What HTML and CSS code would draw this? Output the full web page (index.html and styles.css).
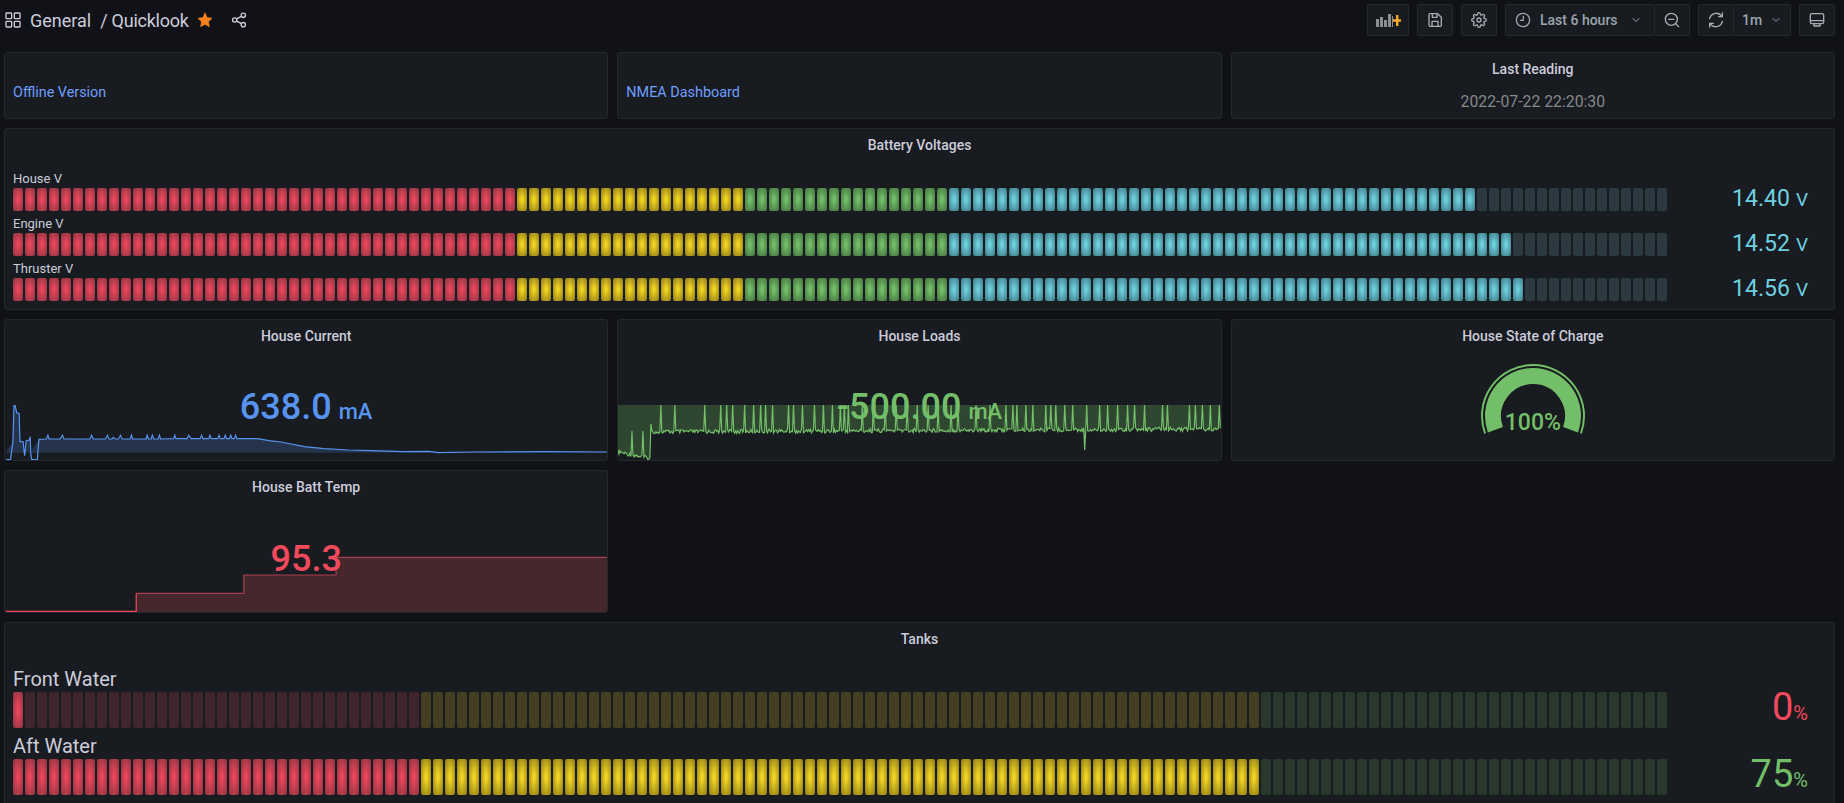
FILE: index.html
```html
<!DOCTYPE html>
<html lang="en">
<head>
    <meta charset="UTF-8">
    <meta name="viewport" content="width=device-width, initial-scale=1.0">
    <title>Quicklook</title>
    <link rel="stylesheet" href="styles.css">
</head>
<body>
    <header class="topbar">
        <div class="crumbs">
            <svg class="icon" viewBox="0 0 24 24"><rect x="1.500" y="1.500" width="8.500" height="8.500" rx="1"/><rect x="14" y="1.500" width="8.500" height="8.500" rx="1"/><rect x="1.500" y="14" width="8.500" height="8.500" rx="1"/><rect x="14" y="14" width="8.500" height="8.500" rx="1"/></svg>
            <span class="crumb-folder">General</span>
            <span class="crumb-name">/ Quicklook</span>
            <svg class="icon star" viewBox="0 0 24 24"><path d="M12 1.500l3.200 6.900 7.300 1-5.300 5.200 1.300 7.400L12 18.400 5.500 22l1.300-7.400L1.500 9.400l7.300-1z"/></svg>
            <svg class="icon share" viewBox="0 0 24 24"><circle cx="18.500" cy="5" r="3.200"/><circle cx="5.500" cy="12" r="3.200"/><circle cx="18.500" cy="19" r="3.200"/><path d="M8.400 10.400l7.200-3.800M8.400 13.600l7.200 3.800"/></svg>
        </div>
        <div class="toolbar">
            <button class="tool tool-add">
                <svg class="add-icon" viewBox="0 0 25 13"><path class="add-bars" d="M0 5h3v8H0zM4 3h3v10H4zM8 6h3v7H8zM12 0h3v13h-3z"/><path class="add-bar-thin" d="M16 2h1v11h-1z"/><path class="add-plus" d="M20 1h2.400v4.300H25v2.400h-2.600V12H20V7.700H17V5.300h3z"/></svg>
            </button>
            <button class="tool">
                <svg class="icon" viewBox="0 0 24 24"><path d="M5 2.500h11l5.500 5.500v11.500a2 2 0 0 1-2 2H5a2 2 0 0 1-2-2v-15a2 2 0 0 1 2-2z"/><path d="M7.500 21.500V14h9v7.500M8 2.500V8h7V2.500"/></svg>
            </button>
            <button class="tool">
                <svg class="icon" viewBox="0 0 24 24"><circle cx="12" cy="12" r="3"/><path d="M19.400 15a1.650 1.650 0 0 0 .33 1.820l.06.06a2 2 0 0 1 0 2.830 2 2 0 0 1-2.830 0l-.06-.06a1.650 1.650 0 0 0-1.820-.33 1.650 1.650 0 0 0-1 1.510V21a2 2 0 0 1-2 2 2 2 0 0 1-2-2v-.09A1.650 1.650 0 0 0 9 19.400a1.650 1.650 0 0 0-1.820.33l-.06.06a2 2 0 0 1-2.830 0 2 2 0 0 1 0-2.830l.06-.06a1.650 1.650 0 0 0 .33-1.820 1.650 1.650 0 0 0-1.510-1H3a2 2 0 0 1-2-2 2 2 0 0 1 2-2h.09A1.650 1.650 0 0 0 4.600 9a1.650 1.650 0 0 0-.33-1.820l-.06-.06a2 2 0 0 1 0-2.830 2 2 0 0 1 2.830 0l.06.06a1.650 1.650 0 0 0 1.820.33H9a1.650 1.650 0 0 0 1-1.510V3a2 2 0 0 1 2-2 2 2 0 0 1 2 2v.09a1.650 1.650 0 0 0 1 1.510 1.650 1.650 0 0 0 1.820-.33l.06-.06a2 2 0 0 1 2.830 0 2 2 0 0 1 0 2.830l-.06.06a1.650 1.650 0 0 0-.33 1.820V9a1.650 1.650 0 0 0 1.510 1H21a2 2 0 0 1 2 2 2 2 0 0 1-2 2h-.09a1.650 1.650 0 0 0-1.510 1z"/></svg>
            </button>
            <div class="tool-group">
                <button class="tool tool-time">
                    <svg class="icon" viewBox="0 0 24 24"><circle cx="12" cy="12" r="10"/><path d="M12.500 6.500v6H8"/></svg>
                    <span>Last 6 hours</span>
                    <svg class="icon chevron" viewBox="0 0 24 24"><path d="M6 9l6 6 6-6"/></svg>
                </button>
                <button class="tool">
                    <svg class="icon" viewBox="0 0 24 24"><circle cx="11" cy="11" r="9"/><path d="M22 22l-4.600-4.600M7 11h8"/></svg>
                </button>
            </div>
            <div class="tool-group">
                <button class="tool">
                    <svg class="icon" viewBox="0 0 24 24"><path d="M2.500 10a10 10 0 0 1 17-5l2 2M21.500 14a10 10 0 0 1-17 5l-2-2"/><path d="M21.500 1.500V7h-5.500M2.500 22.500V17H8"/></svg>
                </button>
                <button class="tool tool-interval">
                    <span>1m</span>
                    <svg class="icon chevron" viewBox="0 0 24 24"><path d="M6 9l6 6 6-6"/></svg>
                </button>
            </div>
            <button class="tool">
                <svg class="icon" viewBox="0 0 24 24"><rect x="2" y="2.500" width="20" height="15" rx="2.500"/><path d="M2 13h20M7.500 17.500v3.500h9v-3.500"/></svg>
            </button>
        </div>
    </header>

    <main class="dashboard">
        <section class="panel link-panel"><a href="#">Offline Version</a></section>
        <section class="panel link-panel"><a href="#">NMEA Dashboard</a></section>
        <section class="panel">
            <h2 class="panel-title">Last Reading</h2>
            <div class="last-reading">2022-07-22 22:20:30</div>
        </section>

        <section class="panel wide">
            <h2 class="panel-title">Battery Voltages</h2>
            <div class="gauges volts">
                <div class="gauge">
                    <div class="gauge-label">House V</div>
                    <div class="gauge-row">
                        <div class="led-bar" data-zones="red:42,yellow:19,green:17,blue:60" data-lit="122"></div>
                        <div class="gauge-value blue">14.40<small>V</small></div>
                    </div>
                </div>
                <div class="gauge">
                    <div class="gauge-label">Engine V</div>
                    <div class="gauge-row">
                        <div class="led-bar" data-zones="red:42,yellow:19,green:17,blue:60" data-lit="125"></div>
                        <div class="gauge-value blue">14.52<small>V</small></div>
                    </div>
                </div>
                <div class="gauge">
                    <div class="gauge-label">Thruster V</div>
                    <div class="gauge-row">
                        <div class="led-bar" data-zones="red:42,yellow:19,green:17,blue:60" data-lit="126"></div>
                        <div class="gauge-value blue">14.56<small>V</small></div>
                    </div>
                </div>
            </div>
        </section>

        <section class="panel">
            <h2 class="panel-title">House Current</h2>
            <div class="stat-value stat-blue">638.0<small>mA</small></div>
            <svg class="chart" viewBox="0 0 604 60" preserveAspectRatio="none">
                <polygon class="fill-blue" points="0,52.700 7.900,42.300 9,5.700 10.200,5.700 11.800,13 14.200,13.300 15,41.700 18.100,41.700 19.700,52 21.300,40.700 24.500,40 25.200,36.700 26,52 34,39.300 41.500,39 230,39 252.900,38.700 264.800,40.700 276.600,42 300.300,46.700 320.100,48.700 343.800,50 367.500,50.700 399.200,51.700 604,52 604,52.700"/>
                <polyline class="line-blue" points="0.700,59.700 5.500,59.700 7.900,42.300 9,5.700 10.200,5.700 11.800,13 14.200,13.300 15,41.700 18.100,41.700 19.700,55.700 21.300,40.700 24.500,40 25.200,36.700 26,55.700 26.800,59.700 32.400,59.700 34,39.300 41.500,39 43,35.300 44.200,39 55.300,39 57.700,35.300 59.200,39 85.300,39 86.900,35.300 88.500,39 100.700,39 102.700,35.300 104.300,39 107.500,39 108.600,37.300 110.600,39 113.800,39 115.800,35.300 117.300,39 125.600,39 126.800,35.300 128,39 141.500,39 142.600,35.300 143.800,39 146.600,39 147.800,35.300 149,39 153.700,39 154.900,35.300 156,39 169.100,38.700 170.300,35.300 171.500,38.700 182.600,38.700 184.100,35.300 186.500,38.700 195.600,38.700 197.200,35.300 198.400,38.700 204.300,38.700 205.500,35.300 206.700,38.700 213.400,38.700 214.600,35.300 215.800,38.700 219.700,38.700 220.900,35.300 222.100,38.700 225.200,38.700 226.400,35.300 227.600,38.700 230,38.700 231.200,35.300 232.400,38.700 252.900,38.700 264.800,40.700 276.600,42 300.300,46.700 320.100,48.700 343.800,50 367.500,50.700 399.200,51.700 424.900,51.300 434.700,52.700 470.300,52 541.400,51.700 604,52"/>
            </svg>
        </section>
        <section class="panel">
            <h2 class="panel-title">House Loads</h2>
            <div class="stat-value stat-green">-500.00<small>mA</small></div>
            <svg class="chart" viewBox="0 0 604 60" preserveAspectRatio="none">
                <polygon id="loadsFill" class="fill-green"/>
                <polyline id="loadsLine" class="line-green"/>
            </svg>
        </section>
        <section class="panel">
            <h2 class="panel-title">House State of Charge</h2>
            <div class="gauge-wrap">
                <svg class="arc-gauge" viewBox="0 0 120 80">
                    <path class="arc-ring" d="M12.080 73.440A51 51 0 1 1 107.920 73.440"/>
                    <path class="arc-main" d="M22.410 69.680A40 40 0 1 1 97.590 69.680"/>
                </svg>
                <div class="arc-text">100%</div>
            </div>
        </section>

        <section class="panel">
            <h2 class="panel-title">House Batt Temp</h2>
            <div class="stat-value stat-red">95.3</div>
            <svg class="chart" viewBox="0 0 604 60" preserveAspectRatio="none">
                <polygon class="fill-red" points="131.600,60 131.600,41.300 239.500,41.300 239.500,23 332,23 332,5.300 604,5.300 604,60"/>
                <polyline class="line-red-dim" points="131.600,41.300 239.500,41.300 239.500,23 332,23 332,5.300 604,5.300"/>
                <polyline class="line-red" points="0,59.300 131.600,59.300 131.600,41.300"/>
            </svg>
        </section>
        <div class="spacer"></div>

        <section class="panel wide">
            <h2 class="panel-title">Tanks</h2>
            <div class="gauges tanks">
                <div class="gauge">
                    <div class="gauge-label">Front Water</div>
                    <div class="gauge-row">
                        <div class="led-bar" data-zones="red:34,yellow:70,green:34" data-lit="1"></div>
                        <div class="gauge-value red">0<small>%</small></div>
                    </div>
                </div>
                <div class="gauge">
                    <div class="gauge-label">Aft Water</div>
                    <div class="gauge-row">
                        <div class="led-bar" data-zones="red:34,yellow:70,green:34" data-lit="104"></div>
                        <div class="gauge-value green">75<small>%</small></div>
                    </div>
                </div>
            </div>
        </section>
    </main>

    <script src="script.js"></script>
</body>
</html>
```

FILE: styles.css
```css
* {
    box-sizing: border-box;
}
html, body {
    height: 100%;
    overflow: hidden;
}
body {
    margin: 0;
    background: #111217;
    color: #ccccdc;
    font-family: Roboto, "Liberation Sans", sans-serif;
    font-size: 14px;
}
.icon {
    width: 16px;
    height: 16px;
    flex: none;
    fill: none;
    stroke: currentColor;
    stroke-width: 2;
    stroke-linecap: round;
    stroke-linejoin: round;
}

/* top bar */
.topbar {
    height: 52px;
    padding: 4px 9px 0 5px;
    display: flex;
    justify-content: space-between;
}
.crumbs {
    height: 32px;
    display: flex;
    align-items: center;
    font-size: 18px;
}
.crumb-folder {
    margin-left: 9px;
}
.crumb-name {
    margin-left: 9px;
    letter-spacing: -.25px;
}
.star {
    margin-left: 8px;
    fill: #f5801e;
    stroke: #f5801e;
    stroke-width: 1;
}
.share {
    margin-left: 18px;
}
.toolbar {
    display: flex;
    gap: 8px;
}
.tool-group {
    display: flex;
}
.tool {
    height: 32px;
    width: 36px;
    padding: 0;
    display: flex;
    align-items: center;
    justify-content: center;
    background: #181b1f;
    border: 1px solid #25282d;
    border-radius: 2px;
    color: #a9adb3;
    font: 500 14px Roboto, sans-serif;
}
.tool-group .tool + .tool {
    margin-left: -1px;
}
.tool-add {
    width: 42px;
}
.add-icon {
    width: 25px;
    height: 13px;
}
.add-bars, .add-bar-thin {
    fill: #8b8d92;
}
.add-plus {
    fill: #f9a825;
}
.tool-time {
    width: 150px;
    justify-content: flex-start;
    padding-left: 9px;
    color: #9aa3ae;
}
.tool-time span {
    margin-left: 9px;
}
.tool-time .chevron {
    margin-left: 12px;
}
.tool-interval {
    width: 58px;
    color: #9aa3ae;
}
.tool-interval .chevron {
    margin-left: 8px;
}
.chevron {
    width: 12px;
    height: 12px;
}

/* dashboard grid */
.dashboard {
    padding: 0 9px 0 4px;
    display: grid;
    grid-template-columns: repeat(3, 1fr);
    grid-template-rows: 67px 182px 142px 143px 220px;
    gap: 9px;
}
.wide {
    grid-column: 1 / -1;
}
.spacer {
    grid-column: span 2;
}
.panel {
    position: relative;
    overflow: hidden;
    background: #181b1f;
    border: 1px solid #24272b;
    border-radius: 3px;
}
.panel-title {
    margin: 0;
    height: 32px;
    line-height: 32px;
    font-size: 14px;
    font-weight: 500;
    text-align: center;
    color: #ccccdc;
}
.link-panel {
    padding: 32px 8px 0;
    line-height: 16px;
    font-size: 14.4px;
}
.link-panel a {
    color: #6e9fff;
    text-decoration: none;
}
.last-reading {
    margin-top: 7px;
    text-align: center;
    font-size: 15.8px;
    line-height: 20px;
    color: #85888d;
}

/* led bars */
.gauges {
    padding: 10px 26px 0 8px;
}
.gauge {
    margin-bottom: 5px;
}
.gauge-label {
    height: 15px;
    line-height: 15px;
    font-size: 13px;
    margin-bottom: 2px;
}
.gauge-row {
    height: 23px;
    display: flex;
    align-items: center;
}
.led-bar {
    flex: none;
    width: 1654px;
    height: 100%;
    display: flex;
    gap: 2px;
}
.led {
    flex: 1;
    border-radius: 2px;
}
.led.red { background: #40252d; }
.led.yellow { background: #443f22; }
.led.green { background: #29382b; }
.led.blue { background: #2b3a40; }
.led.on.red { background: radial-gradient(#ea465b 10%, #8a3341); }
.led.on.yellow { background: radial-gradient(#f2d521 10%, #8a7818); }
.led.on.green { background: radial-gradient(#73bf69 10%, #436e3d); }
.led.on.blue { background: radial-gradient(#6ed0e0 10%, #3d757f); }
.gauge-value {
    flex: 1;
    text-align: right;
    font-size: 23px;
    line-height: 24px;
}
.gauge-value small {
    font-size: 19px;
    margin-left: 6px;
}
.gauge-value.blue { color: #6ed0e0; }
.gauge-value.red { color: #f2495c; }
.gauge-value.green { color: #73bf69; }
.tanks {
    padding-top: 12px;
}
.tanks .gauge {
    margin-bottom: 6px;
}
.tanks .gauge-label {
    height: 24px;
    line-height: 24px;
    font-size: 20px;
    margin-bottom: 1px;
}
.tanks .gauge-row {
    height: 36px;
}
.tanks .gauge-value {
    font-size: 38px;
    line-height: 36px;
}
.tanks .gauge-value small {
    font-size: 20px;
    margin-left: 0;
}

/* stat panels, the graph lies behind the number */
.stat-value {
    position: relative;
    z-index: 1;
    margin-top: 34px;
    text-align: center;
    font-size: 36px;
    line-height: 42px;
    font-weight: 500;
}
.stat-value small {
    margin-left: 7px;
    font-size: 22px;
}
.stat-blue { color: #5794f2; }
.stat-green { color: #73bf69; }
.stat-red {
    color: #f2495c;
    margin-top: 35px;
}
.chart {
    position: absolute;
    left: 0;
    bottom: 0;
    width: 100%;
    height: 60px;
    fill: none;
}
.chart polyline {
    stroke-width: 1.2;
    vector-effect: non-scaling-stroke;
}
.fill-blue { fill: #25344a; }
.line-blue { stroke: #5794f2; }
.fill-green { fill: #2f4630; }
.line-green { stroke: #73bf69; }
.fill-red { fill: #46272e; }
.line-red-dim { stroke: #a8404f; }
.line-red { stroke: #f2495c; }

/* soc gauge */
.gauge-wrap {
    position: relative;
    width: 120px;
    height: 80px;
    margin: 8px auto 0;
}
.arc-gauge {
    display: block;
    width: 120px;
    height: 80px;
    fill: none;
}
.arc-ring {
    stroke: #73bf69;
    stroke-width: 2;
}
.arc-main {
    stroke: #73bf69;
    stroke-width: 16;
}
.arc-text {
    position: absolute;
    left: 0;
    right: 0;
    top: 49px;
    text-align: center;
    font-size: 23px;
    line-height: 28px;
    font-weight: 500;
    color: #73bf69;
}
```

FILE: script.js
```js
// build the led cells of every bar gauge
const CELLS_PER_BAR = 138;

document.querySelectorAll(".led-bar").forEach((bar) => {
    const lit = parseInt(bar.dataset.lit);
    let index = 0;
    bar.dataset.zones.split(",").forEach((zone) => {
        const [color, count] = zone.split(":");
        for (let i = 0; i < parseInt(count) && index < CELLS_PER_BAR; i++) {
            const led = document.createElement("div");
            led.className = `led ${color}${index < lit ? " on" : ""}`;
            bar.appendChild(led);
            index++;
        }
    });
});

// house loads trace: a noisy line with short spikes up to zero
const spikes = [43, 57, 87, 103, 109, 115, 127, 136, 143, 148, 155, 171, 176, 185, 197, 206, 215, 223, 227, 231,
    245, 256, 268, 279, 290, 300, 311, 321, 334, 341, 359, 373, 389, 396, 400, 409, 416, 429, 434, 439, 448, 456,
    470, 483, 491, 501, 511, 518, 528, 546, 551, 573, 579, 586, 594, 603];

const noise = (x) => {
    const n = Math.sin(x * 12.9898) * 43758.5453;
    return n - Math.floor(n);
};

const points = [];
for (let x = 0; x <= 604; x++) {
    let y;
    if (x < 33) {
        y = 50 + x * 0.2 + noise(x) * 4;
    } else {
        y = 32 - (x / 604) * 3 + noise(x) * 4 - 2;
    }
    if (x === 14 || x === 25) y = 31;
    if (x === 33) y = 24;
    if (spikes.includes(x)) y = 5;
    if (x === 468) y = 50;
    points.push(`${x},${y.toFixed(1)}`);
}

document.getElementById("loadsLine").setAttribute("points", points.join(" "));
document.getElementById("loadsFill").setAttribute("points", `0,5 ${points.join(" ")} 604,5`);
```
